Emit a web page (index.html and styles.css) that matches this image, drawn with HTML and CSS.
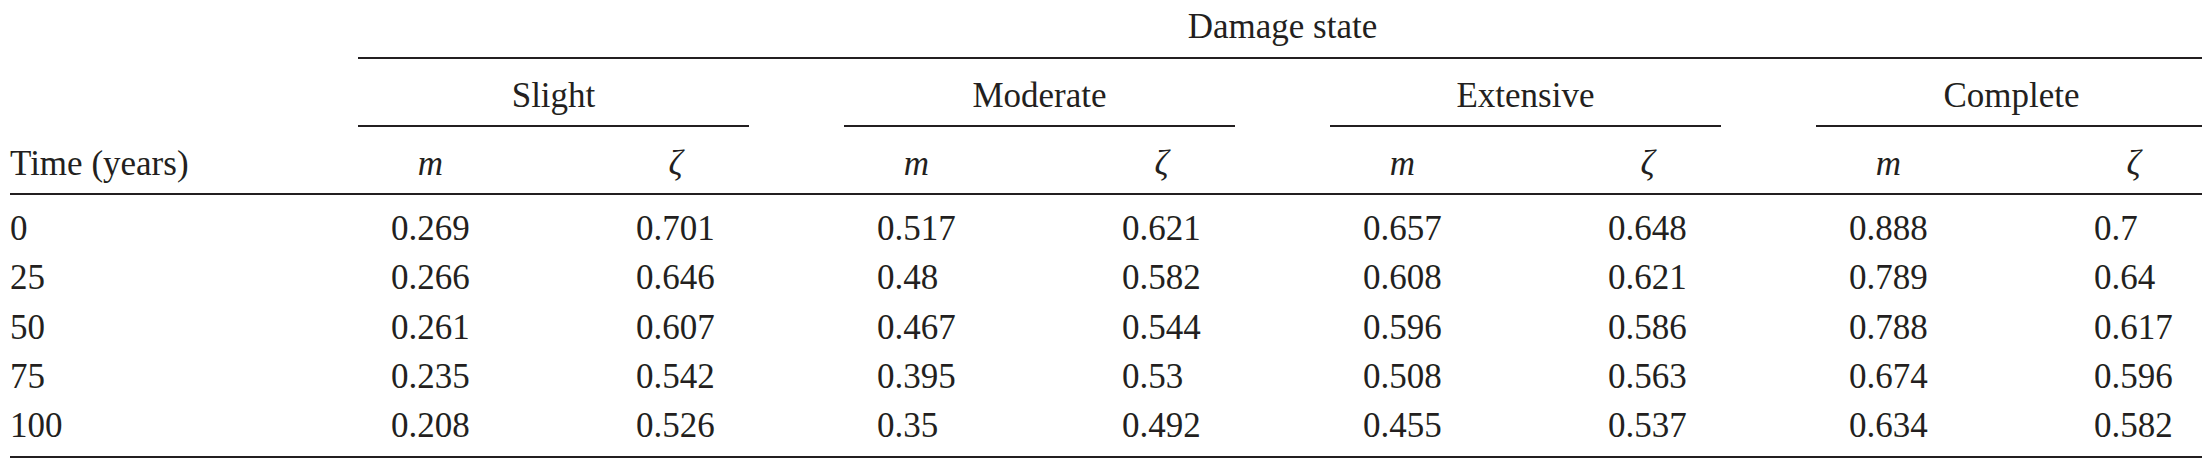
FILE: index.html
```html
<!DOCTYPE html>
<html lang="en">
<head>
<meta charset="utf-8">
<title>Damage state table</title>
<link rel="stylesheet" href="styles.css">
</head>
<body>
<div class="table">
  <div class="row row-title">
    <div class="title">Damage state</div>
  </div>
  <div class="row rule-row">
    <div class="rule rule-groups"></div>
  </div>
  <div class="row row-groups">
    <div></div>
    <div class="group">Slight</div>
    <div class="group">Moderate</div>
    <div class="group">Extensive</div>
    <div class="group">Complete</div>
  </div>
  <div class="row row-sub">
    <div class="label">Time (years)</div>
    <div class="pair"><span class="sym">m</span><span class="sym">ζ</span></div>
    <div class="pair"><span class="sym">m</span><span class="sym">ζ</span></div>
    <div class="pair"><span class="sym">m</span><span class="sym">ζ</span></div>
    <div class="pair"><span class="sym">m</span><span class="sym">ζ</span></div>
  </div>
  <div class="row rule-row rule-row-head">
    <div class="rule rule-full"></div>
  </div>
  <div class="body">
    <div class="row data">
      <div class="label">0</div>
      <div class="pair"><span>0.269</span><span>0.701</span></div>
      <div class="pair"><span>0.517</span><span>0.621</span></div>
      <div class="pair"><span>0.657</span><span>0.648</span></div>
      <div class="pair"><span>0.888</span><span>0.7</span></div>
    </div>
    <div class="row data">
      <div class="label">25</div>
      <div class="pair"><span>0.266</span><span>0.646</span></div>
      <div class="pair"><span>0.48</span><span>0.582</span></div>
      <div class="pair"><span>0.608</span><span>0.621</span></div>
      <div class="pair"><span>0.789</span><span>0.64</span></div>
    </div>
    <div class="row data">
      <div class="label">50</div>
      <div class="pair"><span>0.261</span><span>0.607</span></div>
      <div class="pair"><span>0.467</span><span>0.544</span></div>
      <div class="pair"><span>0.596</span><span>0.586</span></div>
      <div class="pair"><span>0.788</span><span>0.617</span></div>
    </div>
    <div class="row data">
      <div class="label">75</div>
      <div class="pair"><span>0.235</span><span>0.542</span></div>
      <div class="pair"><span>0.395</span><span>0.53</span></div>
      <div class="pair"><span>0.508</span><span>0.563</span></div>
      <div class="pair"><span>0.674</span><span>0.596</span></div>
    </div>
    <div class="row data">
      <div class="label">100</div>
      <div class="pair"><span>0.208</span><span>0.526</span></div>
      <div class="pair"><span>0.35</span><span>0.492</span></div>
      <div class="pair"><span>0.455</span><span>0.537</span></div>
      <div class="pair"><span>0.634</span><span>0.582</span></div>
    </div>
  </div>
  <div class="row rule-row rule-row-bottom">
    <div class="rule rule-full"></div>
  </div>
</div>
</body>
</html>
```
FILE: styles.css
```css
html, body {
  margin: 0;
  padding: 0;
  background: #ffffff;
  overflow: hidden;
}

body {
  font-family: "Liberation Serif", "Times New Roman", serif;
  font-size: 35px;
  color: #231f20;
}

.table {
  margin: 2px 0 0 10px;
  width: 2197px;
}

.row {
  display: grid;
  grid-template-columns: 253px repeat(4, 391px);
  column-gap: 95px;
  line-height: 49px;
}

.title {
  grid-column: 2 / -1;
  text-align: center;
}

.rule-row {
  line-height: 0;
}

.rule {
  height: 2px;
  background: #231f20;
}

.rule-groups {
  grid-column: 2 / -1;
  margin-top: 6px;
}

.rule-full {
  grid-column: 1 / -1;
}

.row-groups {
  margin-top: 12px;
}

.group {
  text-align: center;
  padding-bottom: 5px;
  border-bottom: 2px solid #231f20;
}

.row-sub {
  margin-top: 12px;
}

.rule-row-head .rule-full {
  margin-top: 5px;
}

.pair {
  display: grid;
  grid-template-columns: 245px 1fr;
  padding-left: 33px;
}

.sym {
  width: 79px;
  text-align: center;
  font-style: italic;
}

.body {
  padding-top: 9px;
}

.data {
  line-height: 49.25px;
}

.rule-row-bottom .rule-full {
  margin-top: 6px;
}
```
